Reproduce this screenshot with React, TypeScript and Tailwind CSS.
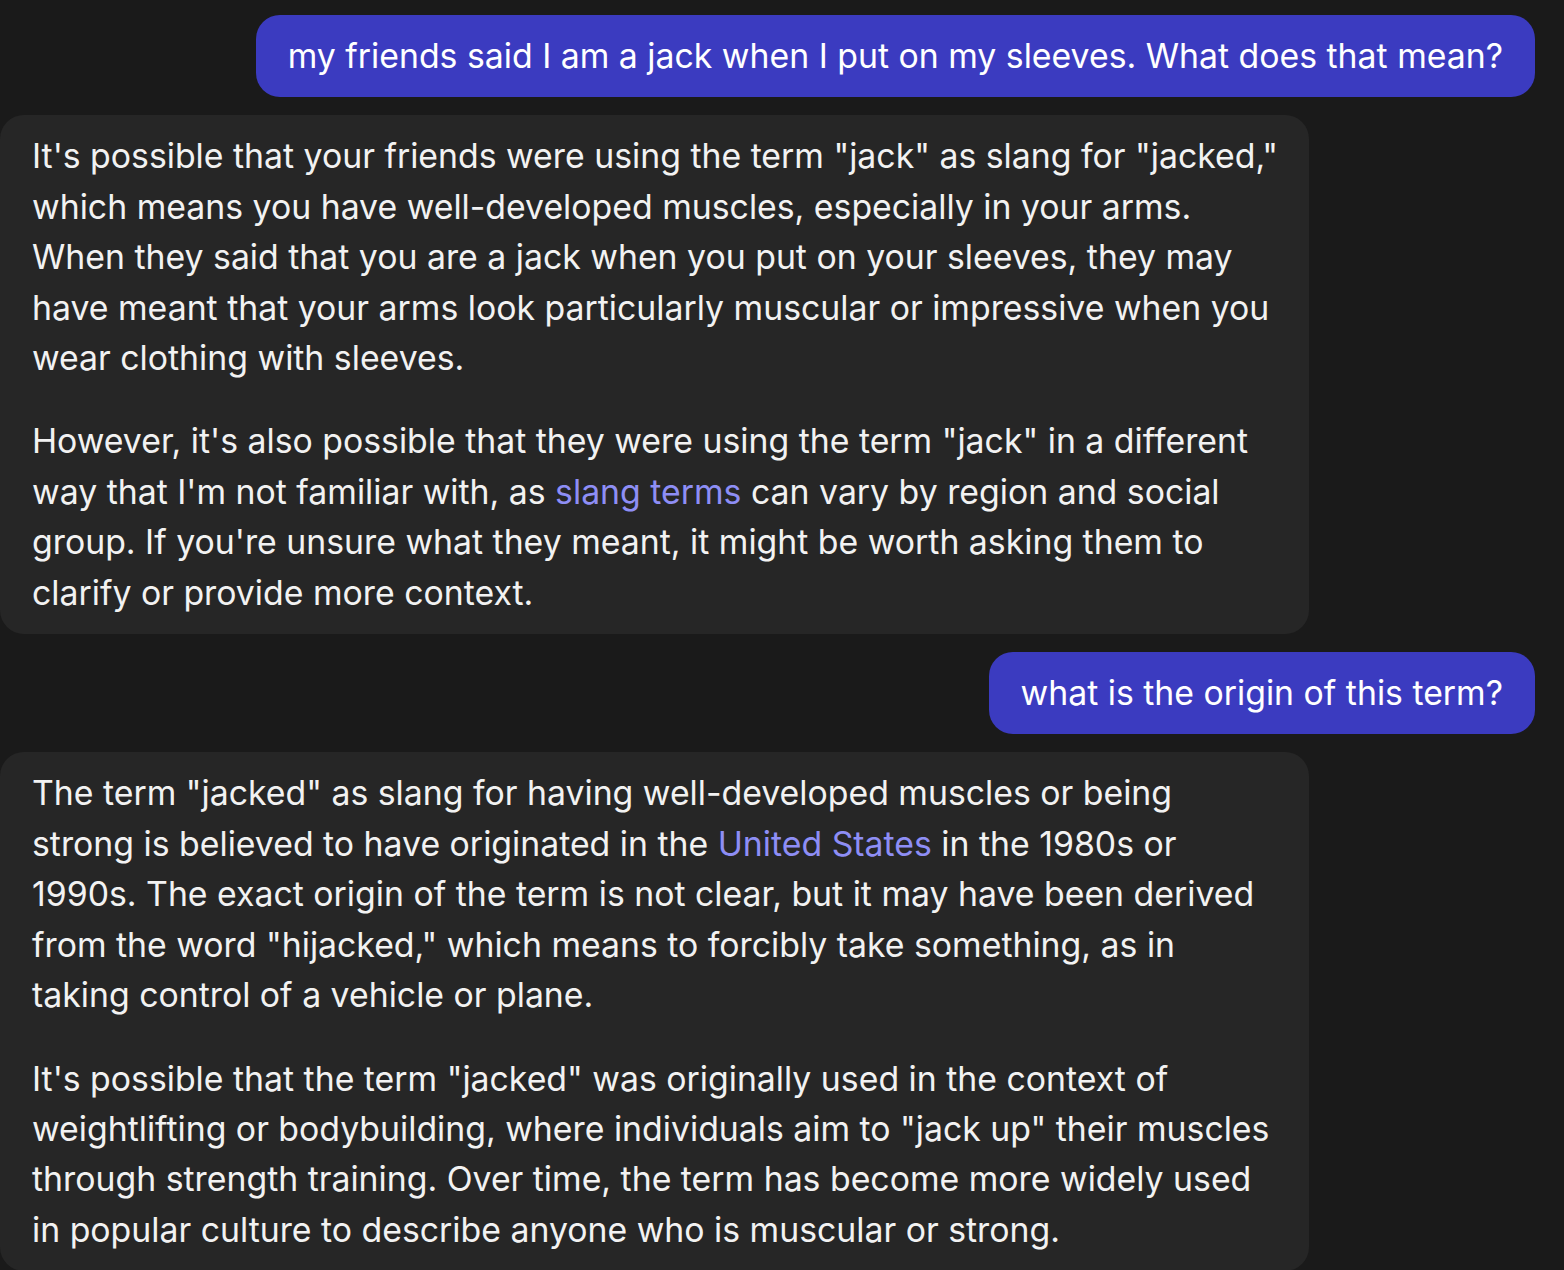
import type { ReactNode } from "react";

type Part = string | { link: string };

function Line({ parts }: { parts: Part[] }) {
  return (
    <span className="block whitespace-nowrap">
      {parts.map((p, i) =>
        typeof p === "string" ? (
          <span key={i}>{p}</span>
        ) : (
          <span key={i} className="text-[#8e8ef5]">
            {p.link}
          </span>
        )
      )}
    </span>
  );
}

function UserBubble({ children }: { children: ReactNode }) {
  return (
    <div className="flex justify-end pr-[29px]">
      <div className="rounded-[24px] bg-[#3b3bc0] px-8 py-4 text-white">
        {children}
      </div>
    </div>
  );
}

function AssistantBubble({ paragraphs }: { paragraphs: Part[][][] }) {
  return (
    <div className="w-[1309px] rounded-[24px] bg-[#262626] px-8 py-4 text-[#f2f2f2]">
      {paragraphs.map((lines, i) => (
        <p key={i} className={i > 0 ? "mt-[33px]" : ""}>
          {lines.map((l, j) => (
            <Line key={j} parts={l} />
          ))}
        </p>
      ))}
    </div>
  );
}

const first: Part[][][] = [
  [
    [`It's possible that your friends were using the term "jack" as slang for "jacked,"`],
    ["which means you have well-developed muscles, especially in your arms."],
    ["When they said that you are a jack when you put on your sleeves, they may"],
    ["have meant that your arms look particularly muscular or impressive when you"],
    ["wear clothing with sleeves."],
  ],
  [
    [`However, it's also possible that they were using the term "jack" in a different`],
    ["way that I'm not familiar with, as ", { link: "slang terms" }, " can vary by region and social"],
    ["group. If you're unsure what they meant, it might be worth asking them to"],
    ["clarify or provide more context."],
  ],
];

const second: Part[][][] = [
  [
    [`The term "jacked" as slang for having well-developed muscles or being`],
    ["strong is believed to have originated in the ", { link: "United States" }, " in the 1980s or"],
    ["1990s. The exact origin of the term is not clear, but it may have been derived"],
    [`from the word "hijacked," which means to forcibly take something, as in`],
    ["taking control of a vehicle or plane."],
  ],
  [
    [`It's possible that the term "jacked" was originally used in the context of`],
    [`weightlifting or bodybuilding, where individuals aim to "jack up" their muscles`],
    ["through strength training. Over time, the term has become more widely used"],
    ["in popular culture to describe anyone who is muscular or strong."],
  ],
];

export default function App() {
  return (
    <div
      className="min-h-screen bg-[#1a1a1a] pt-[15px] pb-8 text-[33.8px] leading-[50.4px]"
      style={{ fontFamily: "Inter, 'Noto Sans', sans-serif" }}
    >
      <div className="flex flex-col gap-[18px]">
        <UserBubble>
          my friends said I am a jack when I put on my sleeves. What does that mean?
        </UserBubble>
        <AssistantBubble paragraphs={first} />
        <UserBubble>what is the origin of this term?</UserBubble>
        <AssistantBubble paragraphs={second} />
      </div>
    </div>
  );
}
